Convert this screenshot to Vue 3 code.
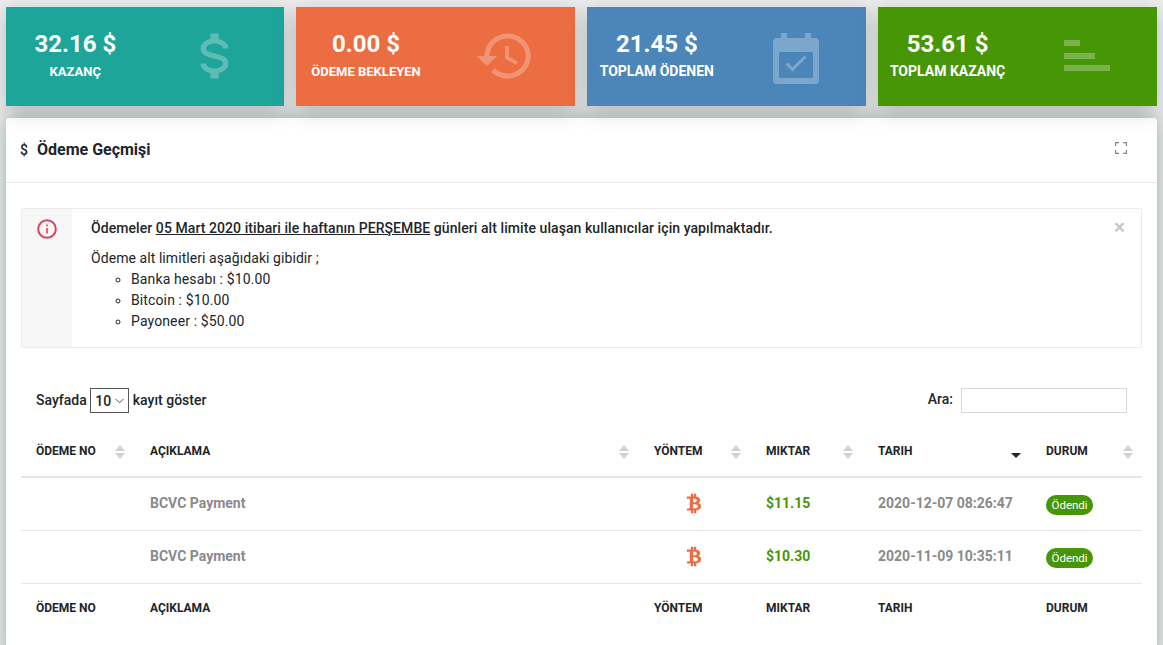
<script setup>
const stats = [
  { value: '32.16 $', label: 'KAZANÇ', color: '#1ea59a', icon: 'dollar' },
  { value: '0.00 $', label: 'ÖDEME BEKLEYEN', color: '#ec6d42', icon: 'history' },
  { value: '21.45 $', label: 'TOPLAM ÖDENEN', color: '#4c86b9', icon: 'calendar', big: true },
  { value: '53.61 $', label: 'TOPLAM KAZANÇ', color: '#479606', icon: 'bars', big: true },
]
const limits = ['Banka hesabı : $10.00', 'Bitcoin : $10.00', 'Payoneer : $50.00']
const columns = [
  { label: 'ÖDEME NO', sort: 'both' },
  { label: 'AÇIKLAMA', sort: 'both' },
  { label: 'YÖNTEM', sort: 'both' },
  { label: 'MIKTAR', sort: 'both' },
  { label: 'TARIH', sort: 'desc' },
  { label: 'DURUM', sort: 'both' },
]
const rows = [
  { desc: 'BCVC Payment', amount: '$11.15', date: '2020-12-07 08:26:47', status: 'Ödendi' },
  { desc: 'BCVC Payment', amount: '$10.30', date: '2020-11-09 10:35:11', status: 'Ödendi' },
]
const btc = 'M4.5,5H8.5V2H10.5V5H11.5V2H13.5V5.09C16.5,5.5 17.5,7 17.5,9C17.5,10.5 16.6,11.7 15.5,12C17,12.3 18.5,13.5 18.5,15.5C18.5,18 16.8,19.6 13.5,19.9V23H11.5V20H10.5V23H8.5V20H4.5L5,18H6.5C7.3,18 7.5,17.5 7.5,17V8C7.5,7.5 7,7 6.5,7H4.5V5M10.5,7V11.5C10.5,11.5 14.5,12 14.5,9.25C14.5,6.5 10.5,7 10.5,7M10.5,13V18C10.5,18 15.5,18.5 15.5,15.5C15.5,12.5 10.5,13 10.5,13Z'
</script>

<template>
  <div class="page">
    <div class="stats">
      <div v-for="s in stats" :key="s.label" class="stat" :style="{ background: s.color }">
        <div class="stat-text">
          <div class="stat-value">{{ s.value }}</div>
          <div class="stat-label" :class="{ big: s.big }">{{ s.label }}</div>
        </div>
        <div class="stat-icon">
          <svg v-if="s.icon === 'dollar'" width="67" height="60" viewBox="0 0 24 24" preserveAspectRatio="none" fill="#fff">
            <path d="M7,15H9C9,16.08 10.37,17 12,17C13.63,17 15,16.08 15,15C15,13.9 13.96,13.5 11.76,12.97C9.64,12.44 7,11.78 7,9C7,7.21 8.47,5.69 10.5,5.18V3H13.5V5.18C15.53,5.69 17,7.21 17,9H15C15,7.92 13.63,7 12,7C10.37,7 9,7.92 9,9C9,10.1 10.04,10.5 12.24,11.03C14.36,11.56 17,12.22 17,15C17,16.79 15.53,18.31 13.5,18.82V21H10.5V18.82C8.47,18.31 7,16.79 7,15Z" />
          </svg>
          <svg v-else-if="s.icon === 'history'" width="62" height="60" viewBox="0 0 24 24" preserveAspectRatio="none" fill="#fff">
            <path d="M13.5,8H12V13L16.28,15.54L17,14.33L13.5,12.25V8M13,3A9,9 0 0,0 4,12H1L4.96,16.03L9,12H6A7,7 0 0,1 13,5A7,7 0 0,1 20,12A7,7 0 0,1 13,19C11.07,19 9.32,18.21 8.06,16.94L6.64,18.36C8.27,20 10.5,21 13,21A9,9 0 0,0 22,12A9,9 0 0,0 13,3Z" />
          </svg>
          <svg v-else-if="s.icon === 'calendar'" class="calendar" width="46" height="51" viewBox="0 0 46 51" fill="#fff">
            <path fill-rule="evenodd" d="M8 0H14V5H32V0H38V5H42A4 4 0 0 1 46 9V47A4 4 0 0 1 42 51H4A4 4 0 0 1 0 47V9A4 4 0 0 1 4 5H8ZM6 19V45H40V19Z" />
            <path d="M12.5 31.5L14.6 29.4L19.5 34.3L31.4 22.4L33.5 24.5L19.5 38.5Z" />
          </svg>
          <div v-else class="bars">
            <span class="bar-s"></span>
            <span class="bar-m"></span>
            <span class="bar-l"></span>
          </div>
        </div>
      </div>
    </div>

    <div class="card">
      <div class="card-head">
        <div class="card-title"><span class="title-icon">$</span>Ödeme Geçmişi</div>
        <svg class="expand" width="12" height="12" viewBox="0 0 12 12" fill="none" stroke="#7d8794" stroke-width="1.2">
          <path d="M0.6 4V0.6H4M8 0.6H11.4V4M11.4 8V11.4H8M4 11.4H0.6V8" />
        </svg>
      </div>
      <div class="card-body">
        <div class="alert">
          <div class="alert-icon">
            <svg width="20" height="20" viewBox="0 0 20 20" fill="none" stroke="#e0405f" stroke-width="2">
              <circle cx="10" cy="10" r="8.8" />
              <path d="M10 9v5.4M10 5.4v1.8" stroke-width="1.6" />
            </svg>
          </div>
          <div class="alert-text">
            <p class="alert-lead">Ödemeler <u>05 Mart 2020 itibari ile haftanın PERŞEMBE</u> günleri alt limite ulaşan kullanıcılar için yapılmaktadır.</p>
            <p class="alert-sub">Ödeme alt limitleri aşağıdaki gibidir ;</p>
            <ul>
              <li v-for="l in limits" :key="l">{{ l }}</li>
            </ul>
          </div>
          <span class="alert-close">×</span>
        </div>

        <div class="controls">
          <div class="length">
            <span class="length-text">Sayfada</span>
            <span class="select">10
              <svg width="9" height="6" viewBox="0 0 9 6" fill="none" stroke="#555" stroke-width="1"><path d="M0.5 0.8L4.5 4.8L8.5 0.8" /></svg>
            </span>
            <span class="length-text">kayıt göster</span>
          </div>
          <div class="search">Ara:<input type="text" /></div>
        </div>

        <table>
          <colgroup>
            <col style="width:113px" /><col style="width:504px" /><col style="width:112px" />
            <col style="width:112px" /><col style="width:168px" /><col style="width:112px" />
          </colgroup>
          <thead>
            <tr>
              <th v-for="c in columns" :key="c.label">
                {{ c.label }}
                <span v-if="c.sort === 'both'" class="sort"><i class="up"></i><i class="down"></i></span>
                <span v-else class="sort sort-desc"><i class="down"></i></span>
              </th>
            </tr>
          </thead>
          <tbody>
            <tr v-for="r in rows" :key="r.date">
              <td></td>
              <td class="muted">{{ r.desc }}</td>
              <td class="method">
                <svg width="16" height="21" viewBox="3.5 1 16 23" fill="#ec6d42" stroke="#ec6d42" stroke-width="0.4" preserveAspectRatio="none"><path :d="btc" /></svg>
              </td>
              <td class="amount">{{ r.amount }}</td>
              <td class="muted">{{ r.date }}</td>
              <td><span class="badge">{{ r.status }}</span></td>
            </tr>
          </tbody>
          <tfoot>
            <tr>
              <th v-for="c in columns" :key="c.label">{{ c.label }}</th>
            </tr>
          </tfoot>
        </table>
      </div>
    </div>
  </div>
</template>

<style>
html, body {
  background: #eceeee;
  overflow: hidden;
}
</style>

<style scoped>
.page {
  height: 645px;
  box-sizing: border-box;
  padding: 7px 6px 0;
  font-family: Roboto, sans-serif;
  color: #212529;
  overflow: hidden;
}
.stats {
  display: grid;
  grid-template-columns: repeat(4, 1fr);
  gap: 12px;
  margin: 0 0.4px 0 -0.4px;
}
.stat {
  height: 99px;
  display: flex;
  align-items: center;
  color: #fff;
  box-shadow: 0 5px 20px rgba(0, 20, 20, 0.22);
}
.stat-text,
.stat-icon {
  flex: 1;
  text-align: center;
}
.stat-text {
  margin-top: -4px;
}
.stat-value {
  font-size: 24px;
  font-weight: 700;
  line-height: 29px;
}
.stat-label {
  margin-top: 5px;
  font-size: 13px;
  font-weight: 700;
  line-height: 15px;
  white-space: nowrap;
}
.stat-label.big {
  font-size: 14px;
}
.stat-icon {
  display: flex;
  justify-content: center;
  align-items: center;
  opacity: 0.27;
  margin-top: -2px;
}
.calendar {
  margin-top: 6px;
}
.bars {
  width: 46px;
  display: flex;
  flex-direction: column;
  gap: 6.5px;
}
.bars span {
  display: block;
  height: 6px;
  background: #fff;
}
.bar-s { width: 16px; }
.bar-m { width: 31px; }
.bar-l { width: 46px; }
.card {
  margin-top: 12px;
  background: #fff;
  border-radius: 3px 3px 0 0;
  box-shadow: 0 0 20px rgba(0, 20, 20, 0.34);
  height: 540px;
}
.card-head {
  height: 64px;
  display: flex;
  align-items: center;
  justify-content: space-between;
  padding: 0 30px 0 14px;
  border-bottom: 1px solid #e6e6e6;
}
.card-title {
  font-size: 16px;
  font-weight: 700;
  color: #212529;
  margin-top: -2px;
}
.title-icon {
  font-size: 14px;
  font-weight: 500;
  margin-right: 9px;
}
.expand {
  margin-top: -5px;
}
.card-body {
  padding: 25px 15px 0;
}
.alert {
  position: relative;
  display: flex;
  height: 140px;
  box-sizing: border-box;
  border: 1px solid #ebebeb;
  border-radius: 2px;
  font-size: 14px;
  letter-spacing: 0.07px;
}
.alert-icon {
  width: 50px;
  background: #f7f7f7;
  padding-top: 10px;
  box-sizing: border-box;
  display: flex;
  justify-content: center;
  align-items: flex-start;
}
.alert-text {
  padding: 9px 0 0 19px;
  line-height: 21px;
}
.alert-text p {
  margin: 0;
}
.alert-lead {
  font-weight: 500;
}
.alert-sub {
  margin-top: 9px !important;
}
.alert-text ul {
  margin: 0;
  padding-left: 40px;
  list-style: circle;
  letter-spacing: 0.12px;
}
.alert-close {
  position: absolute;
  top: 5px;
  right: 16px;
  font-size: 20px;
  line-height: 26px;
  font-weight: 700;
  color: #c8c8c8;
}
.controls {
  display: flex;
  justify-content: space-between;
  align-items: center;
  padding: 0 15px;
  margin-top: 39px;
  height: 27px;
  font-size: 14px;
  font-weight: 500;
}
.length {
  display: flex;
  align-items: center;
  gap: 3.5px;
}
.length-text {
  margin-bottom: 2px;
}
.select {
  display: inline-flex;
  align-items: center;
  justify-content: space-between;
  width: 39px;
  height: 25px;
  box-sizing: border-box;
  padding: 0 4px;
  border: 1px solid #555;
  font-weight: 500;
}
.search input {
  width: 166px;
  height: 25px;
  box-sizing: border-box;
  margin-left: 8px;
  border: 1px solid #d9d9d9;
  outline: none;
  vertical-align: middle;
}
table {
  width: 1121px;
  table-layout: fixed;
  border-collapse: collapse;
  margin-top: 13px;
}
thead th {
  position: relative;
  height: 50px;
  box-sizing: border-box;
  padding: 0 16px 2px;
  border-bottom: 2px solid #e6e6e6;
  text-align: left;
  font-size: 12px;
  font-weight: 700;
  color: #212529;
  white-space: nowrap;
}
thead th:first-child,
tfoot th:first-child {
  padding-left: 15px;
}
tfoot th {
  height: 48px;
  padding: 0 16px;
  text-align: left;
  font-size: 12px;
  font-weight: 700;
  border-top: 1px solid #e6e6e6;
}
.sort {
  position: absolute;
  right: 9px;
  top: 18px;
  width: 10px;
  height: 14px;
}
.sort i {
  position: absolute;
  left: 0;
  width: 0;
  height: 0;
  border-left: 5px solid transparent;
  border-right: 5px solid transparent;
}
.sort .up {
  top: 0;
  border-bottom: 6px solid #d3d3d3;
}
.sort .down {
  bottom: 0;
  border-top: 6px solid #d3d3d3;
}
.sort-desc .down {
  border-top-color: #212529;
  border-top-width: 5px;
  bottom: 1px;
}
tbody td {
  height: 53px;
  box-sizing: border-box;
  padding: 0 16px;
  border-bottom: 1px solid #e6e6e6;
  font-size: 14px;
  font-weight: 500;
}
tbody tr:last-child td {
  border-bottom: none;
}
tbody td.muted,
tbody td.amount {
  padding-bottom: 2px;
}
.muted {
  color: #8a8a8a;
  font-weight: 700;
}
.method {
  text-align: center;
}
.method svg {
  display: inline-block;
  vertical-align: middle;
}
.amount {
  color: #479606;
  font-weight: 700;
}
.badge {
  display: inline-block;
  margin-top: 2px;
  background: #479606;
  color: #fff;
  font-size: 11.5px;
  font-weight: 400;
  line-height: 20px;
  padding: 0 5.5px;
  border-radius: 10px;
}
</style>
